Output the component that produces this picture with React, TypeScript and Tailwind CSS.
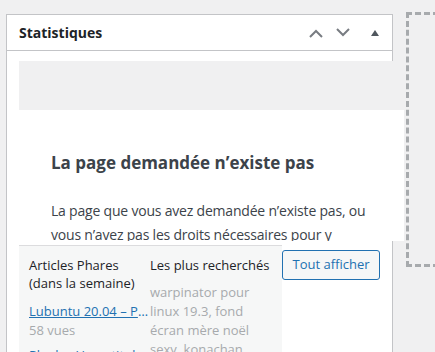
import React from "react";

const ChevronUp = () => (
  <svg width="14" height="9" viewBox="0 0 14 9" className="block">
    <path d="M1 8 L7 2 L13 8" fill="none" stroke="#787c82" strokeWidth="2" />
  </svg>
);

const ChevronDown = () => (
  <svg width="14" height="9" viewBox="0 0 14 9" className="block">
    <path d="M1 1 L7 7 L13 1" fill="none" stroke="#787c82" strokeWidth="2" />
  </svg>
);

const Triangle = () => (
  <svg width="8" height="6" viewBox="0 0 8 6" className="block">
    <path d="M0 6 L4 0 L8 6 Z" fill="#50575e" />
  </svg>
);

export default function App() {
  return (
    <div className="flex items-start w-[435px] h-[352px] overflow-hidden bg-[#f0f0f1] font-['Open_Sans',sans-serif]">
      {/* postbox */}
      <div className="shrink-0 ml-[6px] mt-[14px] w-[387px] border border-[#c3c4c7] bg-white">
        <div className="flex items-center h-[36px] pl-[12px] pr-[13px] border-b border-[#c3c4c7]">
          <h2 className="flex-1 text-[14px] font-bold text-[#1d2327] leading-none">
            Statistiques
          </h2>
          <button className="mt-[1px]">
            <ChevronUp />
          </button>
          <button className="ml-[13px]">
            <ChevronDown />
          </button>
          <button className="ml-[21px]">
            <Triangle />
          </button>
        </div>

        <div className="pl-[12px] pt-[10px]">
          {/* error page */}
          <div className="w-[385px] h-[180px] overflow-hidden bg-white">
            <div className="h-[49px] bg-[#f0f0f1]" />
            <div className="pl-[32px] pr-[32px] pt-[41px] text-[#3c434a]">
              <h1 className="text-[17px] font-bold leading-[24px]">
                La page demandée n’existe pas
              </h1>
              <p className="mt-[24px] text-[14px] tracking-[-0.2px] leading-[24px]">
                La page que vous avez demandée n’existe pas, ou vous n’avez pas les droits nécessaires pour y accéder.
              </p>
            </div>
          </div>

          {/* stats widget */}
          <div className="flex items-start mt-[4px]">
            <div className="flex w-[263px] h-[120px] pt-[10px] pl-[10px] bg-[#f6f7f7] border-t border-[#dcdcde] text-[13px]">
              <div className="w-[121px]">
                <div className="leading-[18px] text-[#1d2327]">
                  Articles Phares
                  <br />
                  (dans la semaine)
                </div>
                <a className="block mt-[10px] truncate underline text-[#2271b1] leading-[19px]">
                  Lubuntu 20.04 – Présentation
                </a>
                <div className="leading-[19px] text-[#a7aaad]">58 vues</div>
                <a className="block mt-[6px] truncate underline text-[#2271b1] leading-[19px]">
                  Plank – Un petit dock
                </a>
              </div>
              <div className="w-[122px]">
                <div className="leading-[18px] text-[#1d2327]">
                  Les plus recherchés
                </div>
                <div className="mt-[9px] leading-[19px] text-[#a7aaad]">
                  warpinator pour linux 19.3, fond écran mère noël sexy, konachan
                </div>
              </div>
            </div>
            <button className="mt-[5px] w-[98px] h-[30px] rounded-[3px] border border-[#2271b1] bg-[#f6f7f7] text-[13px] text-[#2271b1]">
              Tout afficher
            </button>
          </div>
        </div>
      </div>

      {/* drop placeholder */}
      <div className="shrink-0 ml-[13px] mt-[12px] w-[60px] h-[255px] border-[3px] border-dashed border-[#a7aaad]" />
    </div>
  );
}
